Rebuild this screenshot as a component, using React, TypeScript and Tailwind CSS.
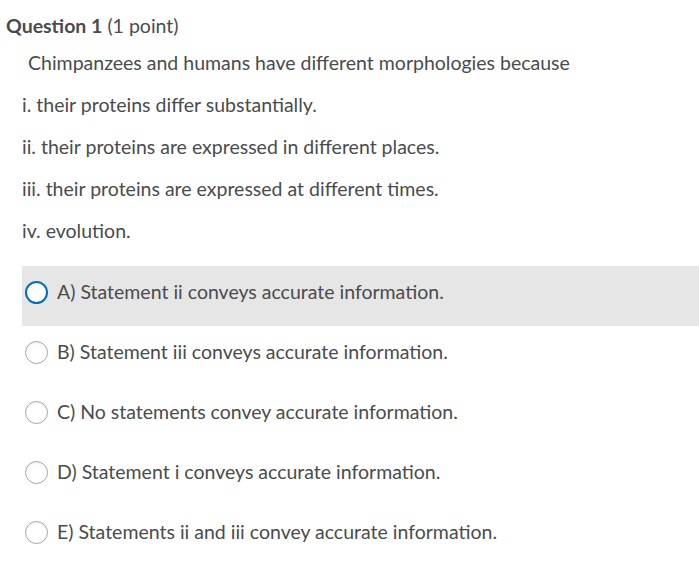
const statements = [
  'i. their proteins differ substantially.',
  'ii. their proteins are expressed in different places.',
  'iii. their proteins are expressed at different times.',
  'iv. evolution.',
];

const options = [
  'A) Statement ii conveys accurate information.',
  'B) Statement iii conveys accurate information.',
  'C) No statements convey accurate information.',
  'D) Statement i conveys accurate information.',
  'E) Statements ii and iii convey accurate information.',
];

function Radio({ focused }: { focused: boolean }) {
  return focused ? (
    <span className="box-border h-[23px] w-[23px] shrink-0 rounded-full border-2 border-[#006fbf] bg-white" />
  ) : (
    <span className="box-border h-[23px] w-[23px] shrink-0 rounded-full border border-[#a3a6a9] bg-white shadow-[inset_0_1px_2px_rgba(0,0,0,0.08)]" />
  );
}

export default function App() {
  return (
    <div className="h-[588px] w-[699px] overflow-hidden bg-white font-['Lato','Open_Sans',sans-serif] text-[19.5px] text-[#494c4e]">
      <h1 className="pl-[6px] pt-[12px] text-[19.5px] leading-[28px]">
        <span className="font-bold">Question 1</span> (1 point)
      </h1>
      <div className="pl-[28px] pt-[9px] leading-[28px]">
        Chimpanzees and humans have different morphologies because
      </div>
      <div className="flex flex-col gap-[14px] pl-[22px] pt-[14px]">
        {statements.map((s) => (
          <div key={s} className="leading-[28px]">
            {s}
          </div>
        ))}
      </div>
      <div className="ml-[22px] mt-[21px] flex flex-col">
        {options.map((o, i) => (
          <div
            key={o}
            className={`flex h-[60px] items-center gap-[9px] pb-[8px] pl-[3px] ${i === 0 ? 'bg-[#e6e6e6]' : ''}`}
          >
            <Radio focused={i === 0} />
            <span>{o}</span>
          </div>
        ))}
      </div>
    </div>
  );
}
